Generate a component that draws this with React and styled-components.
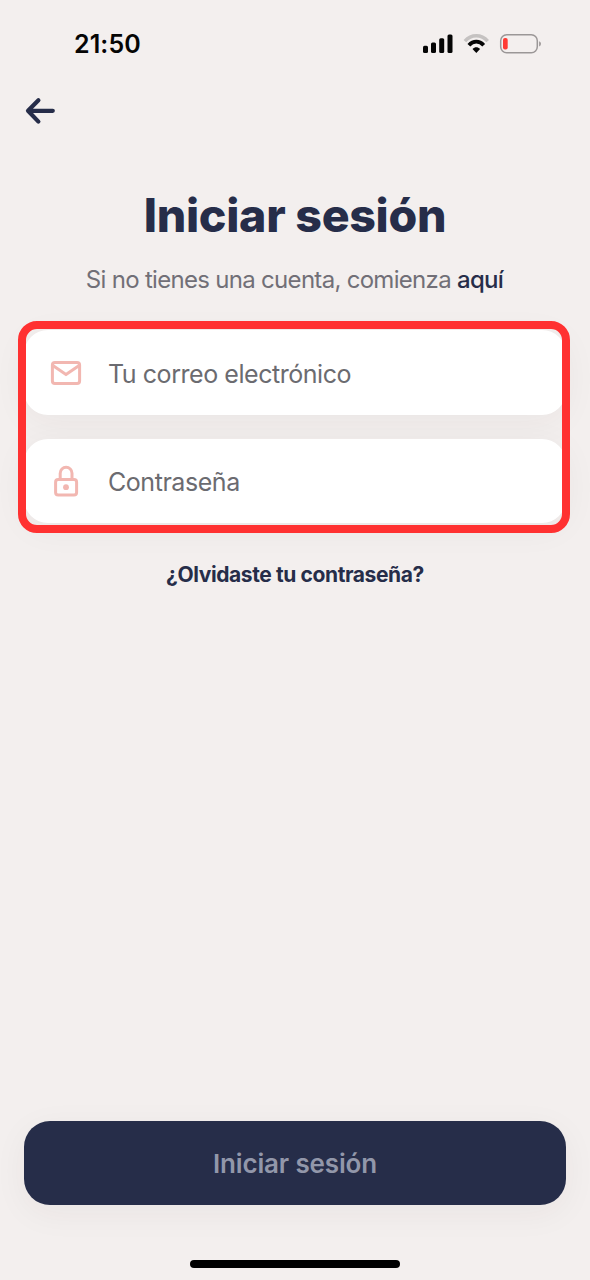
import React from "react";
import styled, { createGlobalStyle } from "styled-components";

const GlobalStyle = createGlobalStyle`
  * { box-sizing: border-box; }
  body { margin: 0; background: #f3efee; }
  button, input { font: inherit; border: 0; padding: 0; background: none; }
`;

const Screen = styled.main`
  display: flex;
  flex-direction: column;
  width: 590px;
  height: 1280px;
  overflow: hidden;
  background: #f3efee;
  color: #262d49;
  font-family: Inter, "Liberation Sans", sans-serif;
`;

const StatusBar = styled.header`
  display: flex;
  align-items: center;
  justify-content: space-between;
  height: 88px;
  padding: 0 48px 0 74px;
  color: #050505;
`;

const Time = styled.time`
  font-size: 25px;
  font-weight: 600;
  line-height: 30px;
  letter-spacing: 0.1px;
`;

const Indicators = styled.div`
  display: flex;
  align-items: center;
`;

const Nav = styled.nav`
  height: 103px;
  padding: 8px 24px;
`;

const BackButton = styled.button`
  display: block;
  width: 32px;
  height: 30px;
  color: inherit;
`;

const Title = styled.h1`
  margin: 0;
  height: 48px;
  text-align: center;
  font-size: 46.5px;
  font-weight: 800;
  line-height: 48px;
  letter-spacing: -0.3px;
`;

const Subtitle = styled.p`
  margin: 25px 0 0;
  height: 32px;
  padding-right: 1px;
  text-align: center;
  color: #716f77;
  font-size: 24px;
  line-height: 32px;
  letter-spacing: -0.7px;
  white-space: nowrap;
`;

const Link = styled.span`
  color: #262d49;
  font-weight: 500;
`;

const Form = styled.form`
  position: relative;
  display: flex;
  flex-direction: column;
  gap: 24px;
  margin: 34px 24px 0;
`;

const Field = styled.label`
  display: flex;
  align-items: center;
  height: 85px;
  padding-left: 26px;
  gap: 26px;
  border-radius: 24px;
  background: #fff;
  box-shadow: 0 6px 34px rgba(60, 35, 40, 0.05);

  & + & { height: 84px; }
`;

const Input = styled.input`
  flex: 1;
  min-width: 0;
  height: 42px;
  padding-top: 2px;
  outline: 0;
  font-size: 25px;
  letter-spacing: ${({ $tracking }) => $tracking};

  &::placeholder { color: #6b6b70; opacity: 1; }
`;

const Highlight = styled.div`
  position: absolute;
  inset: -9px -4px -10px -6px;
  border: 8px solid #ff3131;
  border-radius: 19px;
  pointer-events: none;
`;

const Forgot = styled.button`
  align-self: center;
  margin-top: 38px;
  height: 28px;
  color: inherit;
  font-size: 21px;
  font-weight: 700;
  line-height: 28px;
  letter-spacing: -0.4px;
  white-space: nowrap;
`;

const Footer = styled.footer`
  display: flex;
  flex-direction: column;
  align-items: center;
  margin-top: auto;
  padding: 0 24px 12px;
`;

const Submit = styled.button`
  width: 542px;
  height: 84px;
  margin-bottom: 55px;
  border-radius: 26px;
  background: #262d49;
  box-shadow: 0 8px 34px rgba(60, 35, 40, 0.05);
  color: #9297aa;
  font-size: 26px;
  font-weight: 600;
  letter-spacing: -0.15px;
`;

const HomeIndicator = styled.div`
  width: 210px;
  height: 8px;
  border-radius: 4px;
  background: #000;
`;

const StatusIcons = () => (
  <svg width="120" height="24" viewBox="0 0 120 24" fill="none">
    <g fill="#050505">
      <rect x="1" y="13.8" width="5" height="7.2" rx="1.5" />
      <rect x="9" y="10.5" width="5" height="10.5" rx="1.5" />
      <rect x="17.2" y="6.2" width="5" height="14.8" rx="1.5" />
      <rect x="25.5" y="2.5" width="5" height="18.5" rx="1.5" />
    </g>
    <path d="M42.9 9.1C49.3 1.9 59.3 1.9 65.7 9.1" stroke="#c5c2c1" strokeWidth="3.5" />
    <path d="M46.9 13.2C51.2 8.5 57.4 8.5 61.7 13.2" stroke="#050505" strokeWidth="3.8" />
    <path d="M50.5 17C52.9 14.8 55.7 14.8 58.1 17L54.3 21Z" fill="#050505" />
    <rect x="78.7" y="2.7" width="36.6" height="18" rx="6" stroke="#9b9797" strokeWidth="1.5" />
    <rect x="81" y="6" width="4.7" height="11.5" rx="2" fill="#ff3b34" />
    <path d="M117.1 9.2Q119 9.7 119 11.8T117.1 14.4Z" fill="#9b9797" />
  </svg>
);

const ArrowIcon = () => (
  <svg width="32" height="30" viewBox="0 0 32 30" fill="none" stroke="currentColor" strokeWidth="4.2" strokeLinecap="round" strokeLinejoin="round">
    <path d="M14.4 4.3L4 14.8L14.4 25.6M4.4 14.8H28.8" />
  </svg>
);

const MailIcon = () => (
  <svg width="32" height="30" viewBox="0 0 32 30" fill="none" stroke="#f2b7b1" strokeWidth="3" strokeLinejoin="round">
    <rect x="2.4" y="4.4" width="27.2" height="21.2" rx="2.6" />
    <path d="M3.2 7.8L16 16.6L28.8 7.8" />
  </svg>
);

const LockIcon = () => (
  <svg width="32" height="32" viewBox="0 0 32 32" fill="none" stroke="#f2b7b1" strokeWidth="3">
    <rect x="5.6" y="14.6" width="21" height="15.4" rx="2.6" />
    <path d="M10.2 14.6V8.2A5.9 5.9 0 0 1 22 8.2V14.6" />
    <circle cx="16" cy="22.2" r="2.9" fill="#f2b7b1" stroke="none" />
  </svg>
);

export default function App() {
  return (
    <Screen>
      <GlobalStyle />
      <StatusBar>
        <Time>21:50</Time>
        <Indicators><StatusIcons /></Indicators>
      </StatusBar>
      <Nav>
        <BackButton aria-label="Volver"><ArrowIcon /></BackButton>
      </Nav>
      <Title>Iniciar sesión</Title>
      <Subtitle>Si no tienes una cuenta, comienza <Link>aquí</Link></Subtitle>
      <Form>
        <Field>
          <MailIcon />
          <Input type="email" placeholder="Tu correo electrónico" $tracking="-0.45px" />
        </Field>
        <Field>
          <LockIcon />
          <Input type="password" placeholder="Contraseña" $tracking="-0.45px" />
        </Field>
        <Highlight />
      </Form>
      <Forgot>¿Olvidaste tu contraseña?</Forgot>
      <Footer>
        <Submit>Iniciar sesión</Submit>
        <HomeIndicator />
      </Footer>
    </Screen>
  );
}
